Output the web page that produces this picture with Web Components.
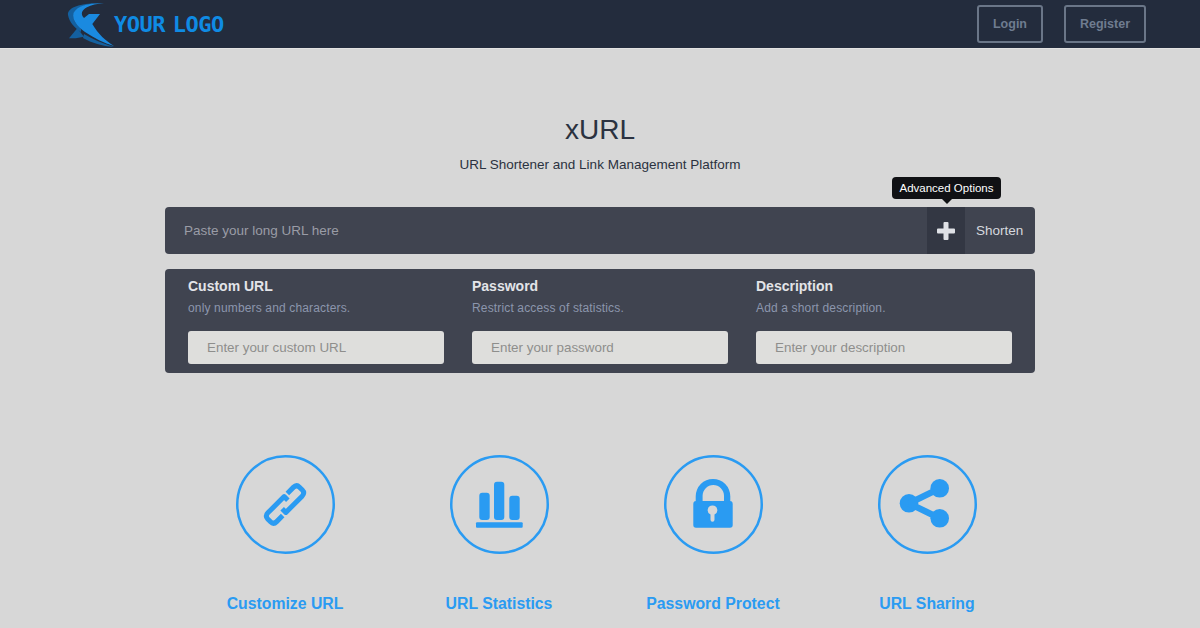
<!DOCTYPE html>
<html>
<head>
<meta charset="utf-8">
<title>xURL</title>
<style>
  html, body { margin: 0; height: 628px; overflow: hidden; background: #d7d7d7; font-family: "Liberation Sans", Arial, sans-serif; }
</style>
</head>
<body>
<site-header></site-header>
<main-hero></main-hero>
<shorten-bar></shorten-bar>
<advanced-panel>
  <option-field label="Custom URL" hint="only numbers and characters." placeholder="Enter your custom URL"></option-field>
  <option-field label="Password" hint="Restrict access of statistics." placeholder="Enter your password"></option-field>
  <option-field label="Description" hint="Add a short description." placeholder="Enter your description"></option-field>
</advanced-panel>
<feature-row>
  <feature-item title="Customize URL" icon="link"></feature-item>
  <feature-item title="URL Statistics" icon="chart"></feature-item>
  <feature-item title="Password Protect" icon="lock"></feature-item>
  <feature-item title="URL Sharing" icon="share"></feature-item>
</feature-row>

<script>
class SiteHeader extends HTMLElement {
    constructor() {
        super();
        this.attachShadow({ mode: 'open' });
        this.shadowRoot.innerHTML = `
      <style>
        :host {
          display: flex;
          box-sizing: border-box;
          height: 49px;
          padding: 0 54px 1px 68px;
          align-items: center;
          background: #232c3d;
          border-bottom: 1px solid #e2e2e2;
        }
        .logo { display: flex; align-items: center; flex: 1; height: 48px; }
        svg { display: block; width: 46px; height: 48px; overflow: visible; }
        .logo-text {
          margin-top: 2px;
          font: bold 22px "DejaVu Sans Mono", monospace;
          color: #0f8be4;
          letter-spacing: -0.5px;
          word-spacing: -5px;
          white-space: nowrap;
        }
        .btn {
          box-sizing: border-box;
          height: 38px;
          padding-top: 1px;
          display: flex;
          align-items: center;
          justify-content: center;
          border: 2px solid #6a7688;
          border-radius: 3px;
          color: #6f7c90;
          font-size: 12.5px;
          font-weight: bold;
        }
        .login { width: 66px; margin-right: 21px; }
        .register { width: 82px; }
      </style>
      <div class="logo">
        <svg viewBox="0 0 46 48">
          <path d="M30 3.300 C15 3 -1 7 0 15 C1 22 7 28 13 32 L13 29 C8 24 4 19 6 13 C8 8 18 4 30 3.300Z" fill="#14609f"/>
          <path d="M1 38.300 L9.300 28.300 L16 36.700 L7.700 38.300Z" fill="#14609f"/>
          <path d="M16 34 C24 39 34 43 46 47 C34 46 24 43 15 38Z" fill="#14609f"/>
          <path d="M36 3.300 C24 2.500 9 5 5.500 13 C3.500 20 10 27 17 32 C26 38 36 43 46 46 C38 41 30 34 24.300 24 L32 14 L21 14 L16 18 C12 14 14 10 19 7.300 C23 5 29 3.500 36 3.300Z" fill="#1a8ae0"/>
        </svg>
        <span class="logo-text">YOUR LOGO</span>
      </div>
      <div class="btn login">Login</div>
      <div class="btn register">Register</div>
    `;
    }
}

class MainHero extends HTMLElement {
    constructor() {
        super();
        this.attachShadow({ mode: 'open' });
        this.shadowRoot.innerHTML = `
      <style>
        :host {
          display: block;
          height: 158px;
          box-sizing: border-box;
          padding-top: 64px;
          text-align: center;
          color: #2b3240;
        }
        h1 { margin: 0; font-size: 28px; font-weight: normal; line-height: 34px; }
        p { margin: 10px 0 0; font-size: 13.5px; line-height: 16px; }
      </style>
      <h1>xURL</h1>
      <p>URL Shortener and Link Management Platform</p>
    `;
    }
}

class ShortenBar extends HTMLElement {
    constructor() {
        super();
        this.attachShadow({ mode: 'open' });
        this.shadowRoot.innerHTML = `
      <style>
        :host {
          display: flex;
          position: relative;
          box-sizing: border-box;
          width: 870px;
          height: 47px;
          margin: 0 auto;
          background: #404450;
          border-radius: 4px;
          font-size: 13.5px;
        }
        .url { flex: 1; padding-left: 19px; line-height: 47px; color: #9a9ca6; }
        .plus {
          width: 38px;
          display: flex;
          align-items: center;
          justify-content: center;
          background: #333743;
        }
        .plus svg { display: block; }
        .go { width: 70px; box-sizing: border-box; padding-left: 11px; line-height: 47px; color: #d6d8de; }
        .tip {
          position: absolute;
          left: 727px;
          top: -30px;
          width: 109px;
          height: 22px;
          line-height: 23px;
          text-align: center;
          font-size: 11.5px;
          color: #fff;
          background: #101114;
          border-radius: 4px;
        }
        .tip::after {
          content: '';
          position: absolute;
          left: 50%;
          top: 100%;
          margin-left: -5px;
          border: 5px solid transparent;
          border-top-color: #101114;
          border-bottom: 0;
        }
      </style>
      <div class="url">Paste your long URL here</div>
      <div class="plus">
        <svg width="18" height="18" viewBox="0 0 18 18"><path d="M6.500 1 Q6.500 0 7.500 0 H10.500 Q11.500 0 11.500 1 V6.500 H17 Q18 6.500 18 7.500 V10.500 Q18 11.500 17 11.500 H11.500 V17 Q11.500 18 10.500 18 H7.500 Q6.500 18 6.500 17 V11.500 H1 Q0 11.500 0 10.500 V7.500 Q0 6.500 1 6.500 H6.500Z" fill="#dfe1e6"/></svg>
      </div>
      <div class="go">Shorten</div>
      <div class="tip">Advanced Options</div>
    `;
    }
}

class AdvancedPanel extends HTMLElement {
    constructor() {
        super();
        this.attachShadow({ mode: 'open' });
        this.shadowRoot.innerHTML = `
      <style>
        :host {
          display: grid;
          grid-template-columns: repeat(3, 256px);
          column-gap: 28px;
          box-sizing: border-box;
          width: 870px;
          height: 104px;
          margin: 15px auto 0;
          padding: 8px 0 0 23px;
          background: #404450;
          border-radius: 4px;
        }
      </style>
      <slot></slot>
    `;
    }
}

class OptionField extends HTMLElement {
    constructor() {
        super();
        this.attachShadow({ mode: 'open' });
        this.shadowRoot.innerHTML = `
      <style>
        :host { display: block; }
        .label { font-size: 14px; font-weight: bold; line-height: 18px; color: #e3e4e8; }
        .hint { margin-top: 4px; font-size: 12px; line-height: 18px; color: #8c96ad; letter-spacing: 0.15px; }
        .input {
          box-sizing: border-box;
          height: 33px;
          margin-top: 14px;
          padding-left: 19px;
          line-height: 33px;
          font-size: 13.4px;
          color: #8e8e8c;
          background: #dededc;
          border-radius: 3px;
        }
      </style>
      <div class="label">${this.getAttribute('label')}</div>
      <div class="hint">${this.getAttribute('hint')}</div>
      <div class="input">${this.getAttribute('placeholder')}</div>
    `;
    }
}

class FeatureRow extends HTMLElement {
    constructor() {
        super();
        this.attachShadow({ mode: 'open' });
        this.shadowRoot.innerHTML = `
      <style>
        :host {
          display: grid;
          grid-template-columns: repeat(4, 214px);
          justify-content: center;
          margin-top: 82px;
          padding-left: 12px;
        }
      </style>
      <slot></slot>
    `;
    }
}

const ICONS = {
    link: `<g transform="translate(49 49.500) rotate(-45)" fill="none" stroke="#2a9bf2" stroke-width="5" stroke-linejoin="round">
        <path d="M9.500 -6.200 H18 Q22.500 -6.200 22.500 -2 V2 Q22.500 6.200 18 6.200 H-5 V1"/>
        <path d="M-9.500 6.200 H-18 Q-22.500 6.200 -22.500 2 V-2 Q-22.500 -6.200 -18 -6.200 H5 V-1"/>
      </g>`,
    chart: `<g fill="#2a9bf2">
        <rect x="29.300" y="37.700" width="10.400" height="27.300" rx="3"/>
        <rect x="44" y="26.700" width="10.300" height="38.300" rx="3"/>
        <rect x="59.300" y="40.700" width="10.400" height="24.300" rx="3"/>
        <rect x="26" y="67.300" width="46.700" height="5.400" rx="1"/>
      </g>`,
    lock: `<g fill="#2a9bf2">
        <path d="M31.700 46 V41.300 a17.300 17.300 0 0 1 34.600 0 V46 H60 V40.700 a10.700 10.700 0 0 0 -21.400 0 V46Z"/>
        <path fill-rule="evenodd" d="M32 46 H66 Q68.700 46 68.700 49 V70 Q68.700 72.700 66 72.700 H32 Q29.300 72.700 29.300 70 V49 Q29.300 46 32 46Z M48.500 50.500 a4.700 4.700 0 0 0 -2 9 V64.800 a2 2 0 0 0 4 0 V59.500 a4.700 4.700 0 0 0 -2 -9Z"/>
      </g>`,
    share: `<g fill="#2a9bf2">
        <circle cx="31" cy="48.300" r="9.300"/>
        <circle cx="61.700" cy="33.300" r="9.300"/>
        <circle cx="61.700" cy="63.300" r="9.300"/>
        <path d="M31 48.300 L61.700 33.300 M31 48.300 L61.700 63.300" stroke="#2a9bf2" stroke-width="6.500" fill="none"/>
      </g>`
};

class FeatureItem extends HTMLElement {
    constructor() {
        super();
        this.attachShadow({ mode: 'open' });
        this.shadowRoot.innerHTML = `
      <style>
        :host { display: flex; flex-direction: column; align-items: center; }
        svg { display: block; width: 99px; height: 99px; }
        .title {
          margin-top: 40px;
          font-size: 15.8px;
          font-weight: bold;
          line-height: 20px;
          color: #2a9bf2;
          white-space: nowrap;
        }
      </style>
      <svg viewBox="0 0 99 99">
        <circle cx="49.5" cy="49.5" r="48.250" fill="none" stroke="#2a9bf2" stroke-width="2.5"/>
        ${ICONS[this.getAttribute('icon')]}
      </svg>
      <div class="title">${this.getAttribute('title')}</div>
    `;
    }
}

customElements.define('site-header', SiteHeader);
customElements.define('main-hero', MainHero);
customElements.define('shorten-bar', ShortenBar);
customElements.define('advanced-panel', AdvancedPanel);
customElements.define('option-field', OptionField);
customElements.define('feature-row', FeatureRow);
customElements.define('feature-item', FeatureItem);
</script>
</body>
</html>
